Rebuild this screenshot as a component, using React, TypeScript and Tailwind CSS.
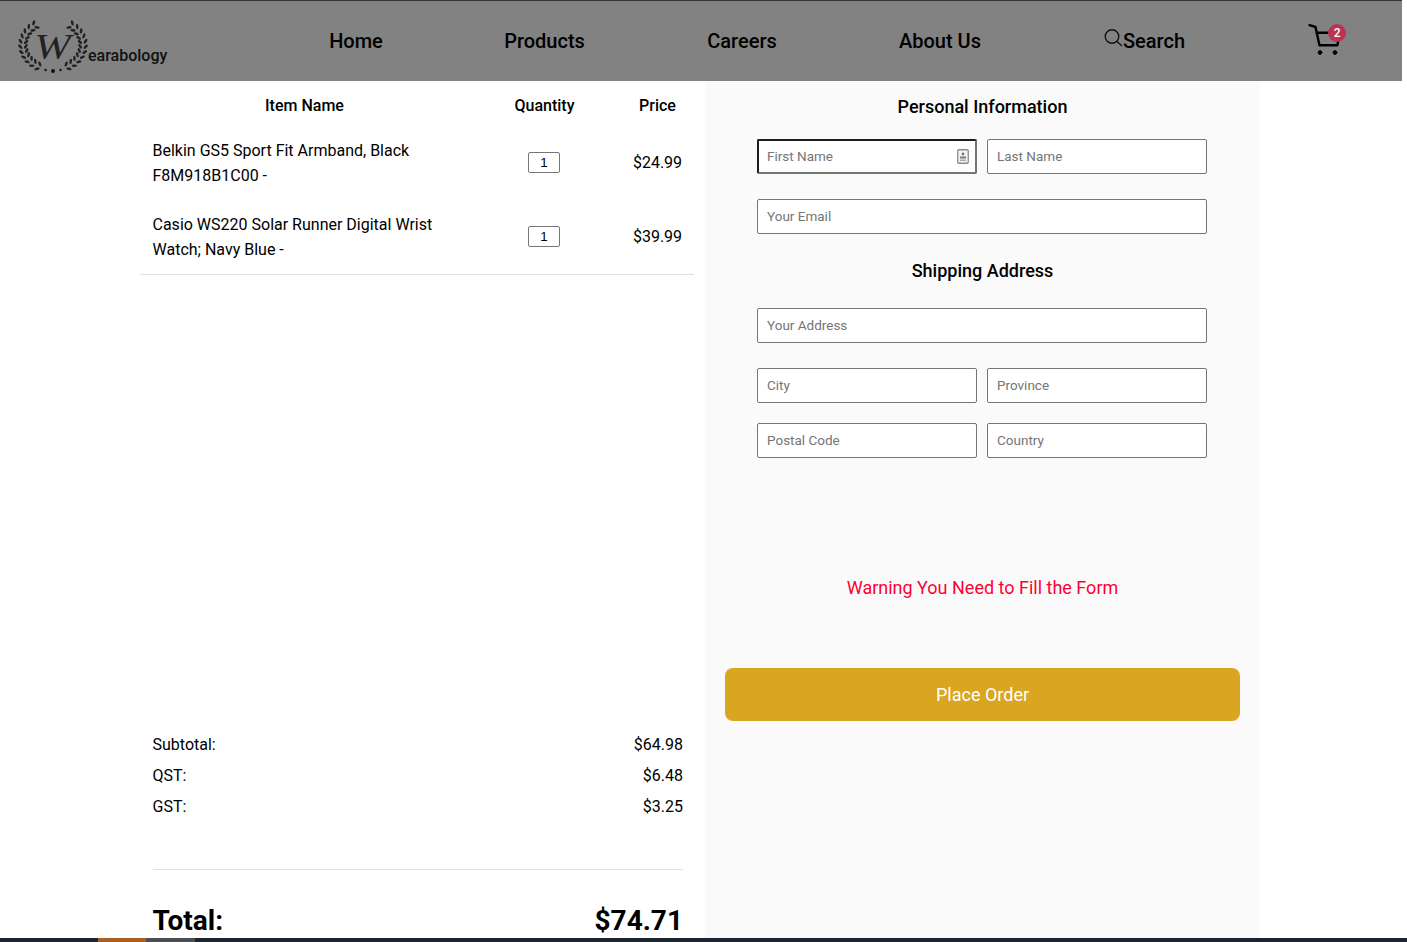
import React from "react";

const navItems = [
  { label: "Home", width: "w-[172px]" },
  { label: "Products", width: "w-[205px]" },
  { label: "Careers", width: "w-[190px]" },
  { label: "About Us", width: "w-[206px]" },
];

const orderItems = [
  { id: 1, lines: ["Belkin GS5 Sport Fit Armband, Black", "F8M918B1C00 -"], price: "$24.99" },
  { id: 2, lines: ["Casio WS220 Solar Runner Digital Wrist", "Watch; Navy Blue -"], price: "$39.99" },
];

const summary = [
  { label: "Subtotal:", value: "$64.98" },
  { label: "QST:", value: "$6.48" },
  { label: "GST:", value: "$3.25" },
];

// laurel leaves around the logo W: an inner and an outer row along each arc
const leaves: { x: number; y: number; r: number }[] = [];
[-1, 1].forEach((side) => {
  for (let a = 36; a <= 160; a += 11.5) {
    [-2.8, 2.8].forEach((off) => {
      const rad = (a * Math.PI) / 180;
      leaves.push({
        x: 35 + side * (30 + off) * Math.sin(rad),
        y: 25 - (24.5 + off) * Math.cos(rad),
        r: side * (a + (off > 0 ? 40 : -40)),
      });
    });
  }
});

const Logo = () => (
  <div className="relative h-[54px] w-[70px]">
    <svg viewBox="0 0 70 54" className="absolute inset-0 h-full w-full">
      {leaves.map((l, i) => (
        <ellipse
          key={i}
          cx={l.x}
          cy={l.y}
          rx="2.7"
          ry="1.3"
          fill="#222"
          transform={`rotate(${l.r} ${l.x} ${l.y})`}
        />
      ))}
      <circle cx="35" cy="51" r="2" fill="#111" />
      <circle cx="27.5" cy="50" r="1.2" fill="#111" />
      <circle cx="42.5" cy="50" r="1.2" fill="#111" />
    </svg>
    <span className="absolute left-[20px] top-[10px] scale-x-125 font-['Liberation_Serif',serif] text-[35px] leading-[36px] text-[#222] italic">
      W
    </span>
  </div>
);

const Field = ({ placeholder, focused }: { placeholder: string; focused?: boolean }) => (
  <div className="relative flex-1">
    <input
      placeholder={placeholder}
      className={
        focused
          ? "h-[35px] w-full rounded-[2px] border-2 border-t-[#1c1c1c] border-l-[#1c1c1c] border-r-[#767676] border-b-[#767676] bg-white pb-[2px] pl-[8px] font-['Roboto',sans-serif] text-[13.5px] outline-none placeholder:text-[#757575]"
          : "h-[35px] w-full rounded-[2px] border border-[#767676] bg-white pb-[2px] pl-[9px] font-['Roboto',sans-serif] text-[13.5px] outline-none placeholder:text-[#757575]"
      }
    />
    {focused && (
      <svg viewBox="0 0 12 15" className="absolute right-[8px] top-[10px] h-[15px] w-[12px]">
        <rect x="0.75" y="0.75" width="10.5" height="13.5" rx="1" fill="#f4f4f4" stroke="#8a8a8a" strokeWidth="1.3" />
        <circle cx="6" cy="5" r="1.4" fill="#777" />
        <rect x="3" y="7.5" width="6" height="2" fill="#777" />
        <rect x="3" y="10.5" width="6" height="1.5" fill="#aaa" />
      </svg>
    )}
  </div>
);

export default function App() {
  return (
    <div className="relative h-screen overflow-hidden bg-white font-['Roboto',sans-serif] text-black">
      <header className="flex h-[81px] w-[1402px] border-t border-[#333] bg-[#828282]">
        <div className="flex w-[270px] pl-[18px] pt-[19px]">
          <Logo />
          <span className="mt-[26px] text-[16px] leading-[19px] font-medium text-[#111]">earabology</span>
        </div>
        <nav className="flex h-full items-center">
          <ul className="flex items-center text-[20px] font-medium">
            {navItems.map((item) => (
              <li key={item.label} className={`${item.width} text-center`}>
                {item.label}
              </li>
            ))}
          </ul>
          <div className="ml-[60px] flex items-center text-[20px] font-medium">
            <svg viewBox="0 0 20 20" className="mb-[6px] h-[20px] w-[20px]" fill="none" stroke="#111" strokeWidth="1.4">
              <circle cx="9" cy="8.5" r="6.8" />
              <path d="M14 13.5l4.5 4" strokeLinecap="round" />
            </svg>
            <span>Search</span>
          </div>
          <div className="relative ml-[123px] h-[34px] w-[40px]">
            <svg viewBox="0 0 40 34" className="absolute inset-0 h-full w-full" fill="none" stroke="#000" strokeWidth="2.4" strokeLinecap="round" strokeLinejoin="round">
              <path d="M1.5 1.2 7.5 3 11.5 21.2h18l1.8-12.5H8.5" />
              <circle cx="12" cy="28.5" r="1.9" fill="#000" strokeWidth="1" />
              <circle cx="27" cy="28.5" r="1.9" fill="#000" strokeWidth="1" />
            </svg>
            <span className="absolute left-[20px] top-0 flex h-[18px] w-[18px] items-center justify-center rounded-full bg-[#b9344f] text-[12px] leading-none font-medium text-white">
              2
            </span>
          </div>
        </nav>
      </header>

      <main className="flex pl-[140px]">
        <section className="w-[554px]">
          <div className="grid h-[44px] grid-cols-[329px_151px_75px] items-start pt-[15px] text-center text-[16px] leading-[19px] font-medium">
            <div>Item Name</div>
            <div>Quantity</div>
            <div>Price</div>
          </div>
          <div className="border-b border-[#dee2e6] pb-[1px]">
            {orderItems.map((item) => (
              <div key={item.id} className="grid h-[74px] grid-cols-[329px_150px_75px] items-center text-[16px] leading-[25px]">
                <div className="pt-[1px] pl-[12.5px]">
                  {item.lines.map((line) => (
                    <div key={line}>{line}</div>
                  ))}
                </div>
                <div className="flex justify-center pt-[1px]">
                  <div className="flex h-[21px] w-[32px] items-center justify-center rounded-[2px] border border-[#767676] pt-[1px] font-['Liberation_Sans',sans-serif] text-[13.33px] leading-none">
                    1
                  </div>
                </div>
                <div className="pl-[2px] text-center">{item.price}</div>
              </div>
            ))}
          </div>

          <div className="mt-[454px] pl-[12.5px] pr-[11px] text-[16px]">
            {summary.map((row) => (
              <div key={row.label} className="flex h-[31px] items-center justify-between">
                <span>{row.label}</span>
                <span>{row.value}</span>
              </div>
            ))}
            <div className="mt-[47px] border-t border-[#dee2e6]" />
            <div className="mt-[31px] flex items-center justify-between text-[28px] leading-[40px] font-bold">
              <span>Total:</span>
              <span>$74.71</span>
            </div>
          </div>
        </section>

        <section className="ml-[11px] flex h-[861px] w-[555px] flex-col bg-[#fafafa] px-[20px]">
          <h2 className="mt-[15px] text-center text-[18px] leading-[22px] font-medium">Personal Information</h2>
          <div className="mr-[33px] ml-[32px] mt-[21px] flex gap-[10px]">
            <Field placeholder="First Name" focused />
            <Field placeholder="Last Name" />
          </div>
          <div className="mr-[33px] ml-[32px] mt-[25px] flex">
            <Field placeholder="Your Email" />
          </div>
          <h2 className="mt-[26px] text-center text-[18px] leading-[22px] font-medium">Shipping Address</h2>
          <div className="mr-[33px] ml-[32px] mt-[26px] flex">
            <Field placeholder="Your Address" />
          </div>
          <div className="mr-[33px] ml-[32px] mt-[25px] flex gap-[10px]">
            <Field placeholder="City" />
            <Field placeholder="Province" />
          </div>
          <div className="mr-[33px] ml-[32px] mt-[20px] flex gap-[10px]">
            <Field placeholder="Postal Code" />
            <Field placeholder="Country" />
          </div>
          <p className="mt-[118px] text-center text-[18px] leading-[24px] text-[#ff0033]">Warning You Need to Fill the Form</p>
          <button className="mt-[68px] h-[53px] w-full rounded-[8px] bg-[#daa520] text-[18px] text-white">Place Order</button>
        </section>
      </main>

      {/* strip of the desktop taskbar along the bottom edge */}
      <div className="absolute inset-x-0 bottom-0 flex h-[4px] bg-[#1b2530]">
        <div className="ml-[98px] w-[48px] bg-[#a85f22]" />
        <div className="w-[49px] bg-[#4a4d52]" />
      </div>
    </div>
  );
}
